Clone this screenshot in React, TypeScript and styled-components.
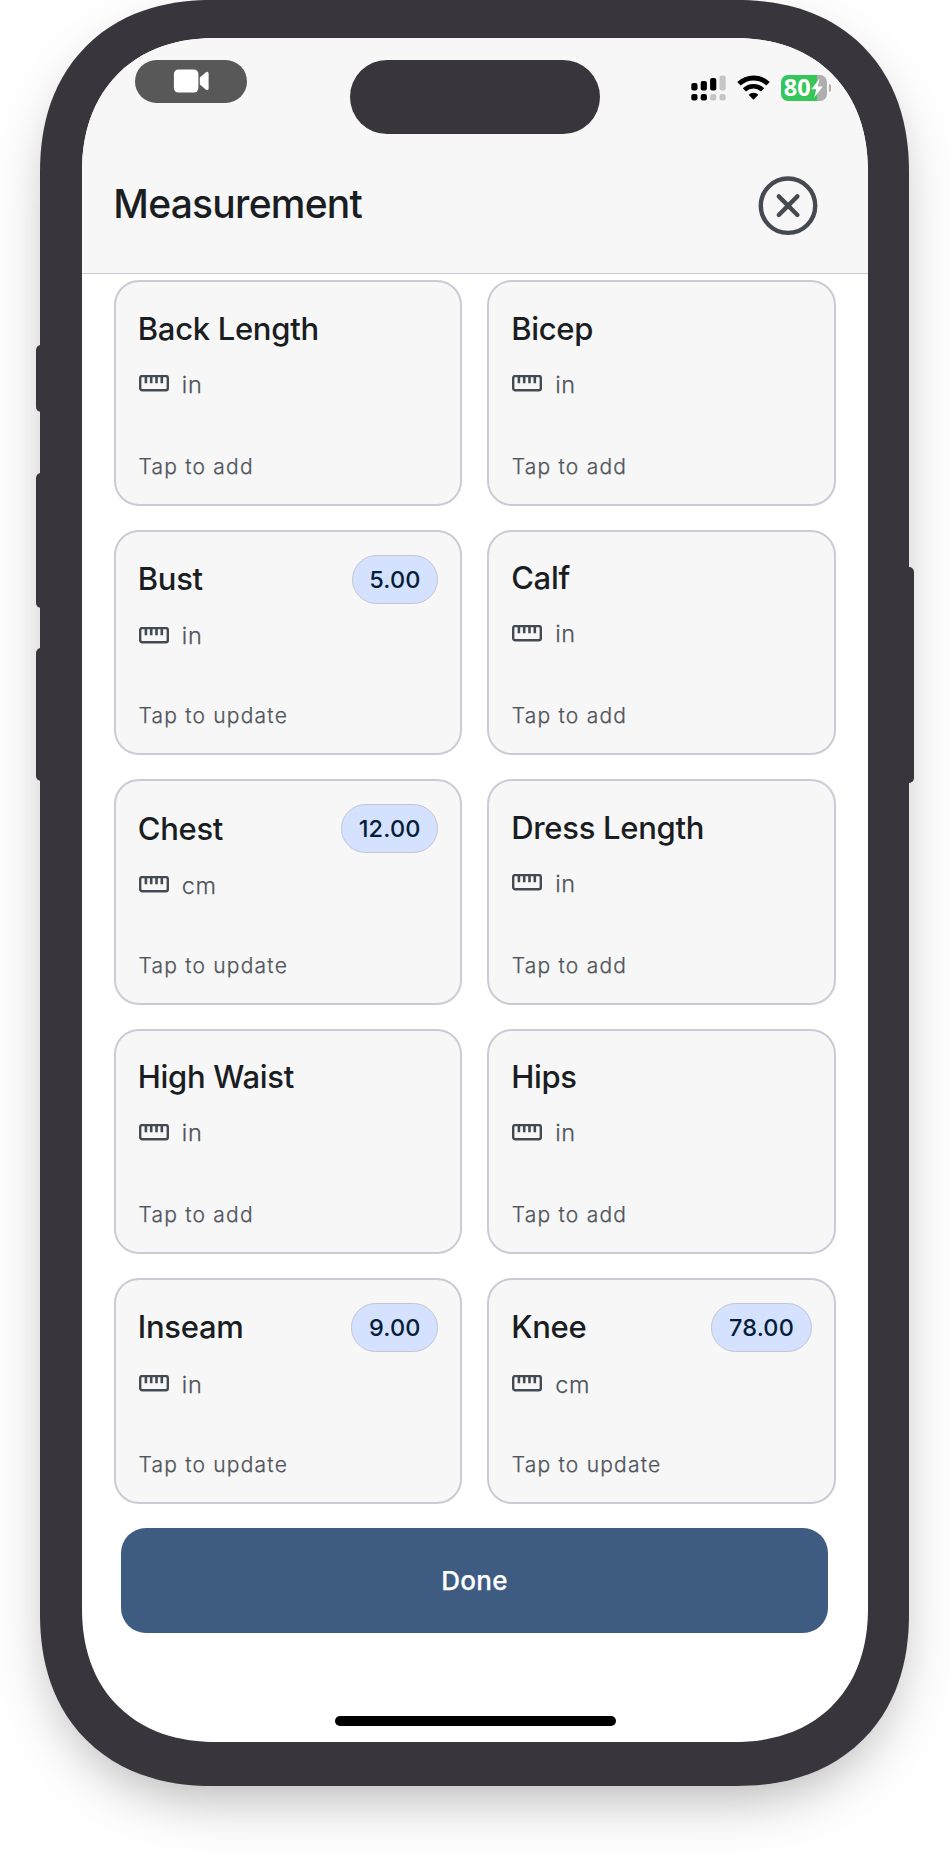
import React from "react";
import styled, { createGlobalStyle } from "styled-components";

const GlobalStyle = createGlobalStyle`
  *, *::before, *::after { box-sizing: border-box; }
  html, body { margin: 0; background: #fefefe; }
  body { font-family: Inter, "Liberation Sans", sans-serif; overflow: hidden; }
  button { font-family: inherit; }
`;

const Stage = styled.main`
  width: 950px;
  height: 1867px;
  padding-left: 40.3px;
  background: #fefefe;
`;

const Phone = styled.div`
  position: relative;
  width: 869.2px;
  height: 1785.7px;
  padding: 37.7px 41.5px 44px;
  background: #38363c;
  border-radius: 172px;
  corner-shape: superellipse(1.15);
  box-shadow: 0 22px 50px -8px rgba(0, 0, 0, 0.27);
`;

const SideKey = styled.span<{ $side: "left" | "right"; $top: number; $length: number }>`
  position: absolute;
  ${(p) => p.$side}: -4.6px;
  top: ${(p) => p.$top}px;
  width: 12px;
  height: ${(p) => p.$length}px;
  border-radius: 5px;
  background: #38363c;
`;

const Screen = styled.div`
  display: flex;
  flex-direction: column;
  height: 100%;
  overflow: hidden;
  background: #fff;
  border-radius: 134px;
  corner-shape: superellipse(1.15);
`;

const Header = styled.header`
  flex: none;
  height: 236.8px;
  background: #f7f7f7;
  border-bottom: 1.5px solid #c9cad4;
`;

const StatusBar = styled.div`
  display: flex;
  align-items: flex-start;
  height: 97px;
  padding: 22.3px 36.7px 0 53px;
`;

const RecordingPill = styled.div`
  display: flex;
  align-items: center;
  justify-content: center;
  width: 112.5px;
  height: 43px;
  border-radius: 22px;
  background: #585858;
`;

const Island = styled.div`
  width: 250px;
  height: 74px;
  margin-left: 102.5px;
  border-radius: 37px;
  background: #38363c;
`;

const Indicators = styled.div`
  display: flex;
  align-items: center;
  gap: 11px;
  height: 26px;
  margin: 15px 0 0 auto;
`;

const Battery = styled.div`
  display: flex;
  align-items: center;
  gap: 2px;
`;

const BatteryBody = styled.div`
  display: flex;
  align-items: center;
  width: 46px;
  height: 26px;
  padding-left: 3px;
  border-radius: 7px;
  background: linear-gradient(90deg, #34c759 36px, #aeaeae 36px);
  color: #fff;
  font: 700 23.5px/24px "Open Sans", sans-serif;
`;

const BatteryLevel = styled.span`
  height: 26px;
`;

const BatteryTip = styled.span`
  width: 2.5px;
  height: 8px;
  border-radius: 0 3px 3px 0;
  background: #aeaeae;
`;

const TitleRow = styled.div`
  display: flex;
  align-items: center;
  justify-content: space-between;
  height: 142px;
  padding: 0 49.8px 0 31.5px;
`;

const Title = styled.h1`
  margin: 0 0 3px;
  color: #1a1e22;
  font-size: 39px;
  font-weight: 500;
  line-height: 48px;
  letter-spacing: -0.75px;
`;

const CloseButton = styled.button`
  display: flex;
  padding: 0;
  border: 0;
  background: none;
`;

const Grid = styled.section`
  display: grid;
  grid-template-columns: 348.8px 348.8px;
  grid-auto-rows: 225.4px;
  gap: 24.1px 24.6px;
  padding: 5.8px 0 0 31.8px;
`;

const Card = styled.article`
  display: flex;
  flex-direction: column;
  padding: 22px 22.2px 22px;
  border: 2px solid #c9ccd6;
  border-radius: 25px;
  background: #f7f7f7;
`;

const CardTop = styled.div<{ $valued: boolean }>`
  display: flex;
  align-items: center;
  justify-content: space-between;
  height: ${(p) => (p.$valued ? 50.5 : 48.5)}px;
`;

const CardTitle = styled.h2`
  margin: 0;
  color: #1a1d22;
  font-size: 31px;
  font-weight: 500;
  line-height: 40px;
  letter-spacing: -0.3px;
`;

const Value = styled.span`
  height: 49px;
  padding: 0 16.5px;
  border: 1.5px solid #c3c6d2;
  border-radius: 25px;
  background: #d4e2ff;
  color: #061d38;
  font-size: 23.5px;
  font-weight: 500;
  line-height: 48px;
  letter-spacing: 0.2px;
`;

const Unit = styled.div`
  display: flex;
  align-items: center;
  gap: 13.2px;
  height: 28px;
  margin-top: 17.2px;
  padding-left: 0.8px;
  color: #50545c;
  font-size: 23.5px;
  line-height: 28px;
  font-weight: 300;
  letter-spacing: 0.7px;
  -webkit-text-stroke: 0.25px #50545c;
`;

const UnitName = styled.span`
  padding-top: 1.5px;
`;

const Hint = styled.p`
  margin: auto 0 0;
  padding-left: 0.6px;
  color: #50545c;
  font-size: 21px;
  font-weight: 300;
  line-height: 30px;
  letter-spacing: 1.22px;
  -webkit-text-stroke: 0.25px #50545c;
`;

const DoneButton = styled.button`
  flex: none;
  width: 706.5px;
  height: 105px;
  margin: 24.3px 0 0 39.5px;
  padding: 2px 6px 1px;
  border: 0;
  border-radius: 25px;
  background: #3e5b81;
  color: #fff;
  font-size: 26px;
  font-weight: 500;
  letter-spacing: 0.3px;
  -webkit-text-stroke: 0.25px #fff;
`;

const HomeBar = styled.div`
  width: 281px;
  height: 10.5px;
  margin: auto auto 15.7px 253.2px;
  border-radius: 6px;
  background: #000;
`;

const CameraIcon = () => (
  <svg width="36" height="24" viewBox="0 0 36 24" fill="#fff">
    <rect x="0.9" y="0.5" width="24.5" height="23" rx="4.5" />
    <path d="M26.8 8.5 32.7 3.4Q35.6 1.5 35.6 5V19Q35.6 22.5 32.7 20.6L26.8 15.5Z" />
  </svg>
);

const SignalIcon = () => (
  <svg width="35" height="26" viewBox="0 0 35 26">
    <rect x="0.3" y="8" width="6.2" height="7.6" rx="2" />
    <rect x="9.7" y="6" width="6.2" height="9.6" rx="2" />
    <rect x="19.1" y="3" width="6.2" height="12.6" rx="2" />
    <rect x="28.5" y="0.5" width="6.2" height="15.1" rx="2" fill="#c6c6c6" />
    <rect x="0.3" y="19" width="6.2" height="6.6" rx="2" />
    <rect x="9.7" y="19" width="6.2" height="6.6" rx="2" />
    <rect x="19.1" y="19" width="6.2" height="6.6" rx="2" fill="#c6c6c6" />
    <rect x="28.5" y="19" width="6.2" height="6.6" rx="2" fill="#c6c6c6" />
  </svg>
);

const WifiIcon = () => (
  <svg width="33" height="26" viewBox="0 0 33 26">
    <path d="M2 8.7a21 21 0 0 1 29 0" fill="none" stroke="#000" strokeWidth="5" />
    <path d="M7.4 14.9a13.2 13.2 0 0 1 18.2 0" fill="none" stroke="#000" strokeWidth="4.6" />
    <path d="M11.6 19.7a7.4 7.4 0 0 1 9.8 0L16.5 24.7Z" />
  </svg>
);

const BoltIcon = () => (
  <svg width="12" height="20" viewBox="0 0 12 20" fill="#fff">
    <path d="M8.7 0.5 0.3 11.3H5.3L3.2 19.5 11.8 8.4H6.7Z" />
  </svg>
);

const CloseIcon = () => (
  <svg width="60" height="60" viewBox="0 0 60 60" fill="none" stroke="#444a50" strokeWidth="4.4" strokeLinecap="round">
    <circle cx="30" cy="29.7" r="27.2" />
    <path d="M20.8 20.4 39.4 39M39.4 20.4 20.8 39" />
  </svg>
);

const RulerIcon = () => (
  <svg width="30" height="17" viewBox="0 0 30 17" fill="none" stroke="#444a52">
    <rect x="1.2" y="1" width="27.6" height="14.2" rx="2" strokeWidth="2.4" />
    <path d="M6.9 2V8.2M12.2 2V8.2M17.5 2V8.2M22.8 2V8.2" strokeWidth="2.6" />
  </svg>
);

type Measurement = { name: string; unit: string; value?: string };

const measurements: Measurement[] = [
  { name: "Back Length", unit: "in" },
  { name: "Bicep", unit: "in" },
  { name: "Bust", unit: "in", value: "5.00" },
  { name: "Calf", unit: "in" },
  { name: "Chest", unit: "cm", value: "12.00" },
  { name: "Dress Length", unit: "in" },
  { name: "High Waist", unit: "in" },
  { name: "Hips", unit: "in" },
  { name: "Inseam", unit: "in", value: "9.00" },
  { name: "Knee", unit: "cm", value: "78.00" },
];

const MeasurementCard = ({ name, unit, value }: Measurement) => (
  <Card>
    <CardTop $valued={!!value}>
      <CardTitle>{name}</CardTitle>
      {value && <Value>{value}</Value>}
    </CardTop>
    <Unit>
      <RulerIcon />
      <UnitName>{unit}</UnitName>
    </Unit>
    <Hint>{value ? "Tap to update" : "Tap to add"}</Hint>
  </Card>
);

export default function App() {
  return (
    <Stage>
      <GlobalStyle />
      <Phone>
        <SideKey $side="left" $top={345} $length={66.5} />
        <SideKey $side="left" $top={472.6} $length={135.4} />
        <SideKey $side="left" $top={647.6} $length={133.4} />
        <SideKey $side="right" $top={567} $length={215.5} />
        <Screen>
          <Header>
            <StatusBar>
              <RecordingPill><CameraIcon /></RecordingPill>
              <Island />
              <Indicators>
                <SignalIcon />
                <WifiIcon />
                <Battery>
                  <BatteryBody><BatteryLevel>80</BatteryLevel><BoltIcon /></BatteryBody>
                  <BatteryTip />
                </Battery>
              </Indicators>
            </StatusBar>
            <TitleRow>
              <Title>Measurement</Title>
              <CloseButton aria-label="Close"><CloseIcon /></CloseButton>
            </TitleRow>
          </Header>
          <Grid>
            {measurements.map((m) => <MeasurementCard key={m.name} {...m} />)}
          </Grid>
          <DoneButton>Done</DoneButton>
          <HomeBar />
        </Screen>
      </Phone>
    </Stage>
  );
}
